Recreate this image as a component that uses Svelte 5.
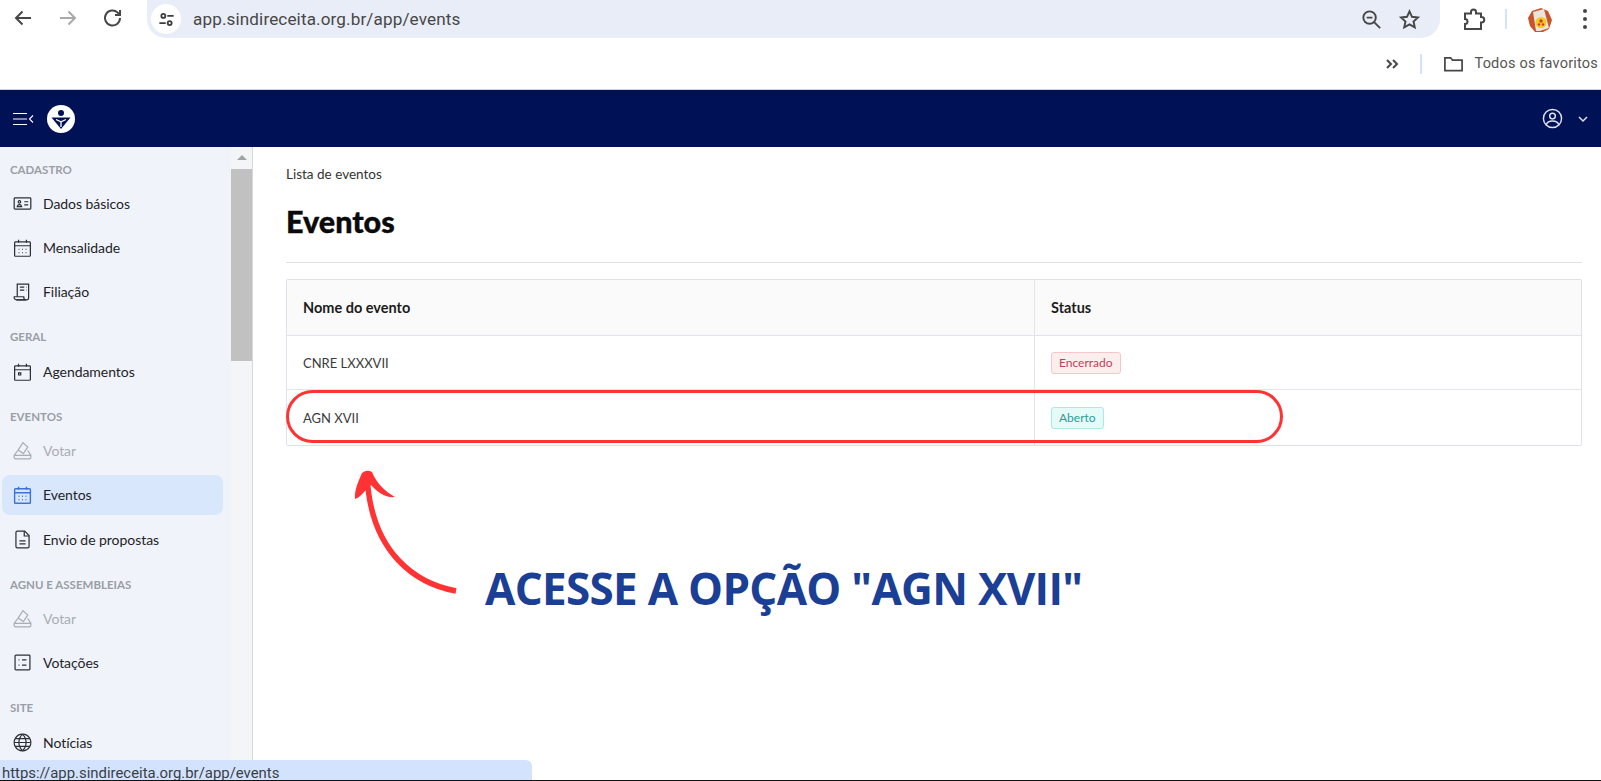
<script>
  const icons = {
    card: ['M3.500 5.500h17a1 1 0 0 1 1 1v11a1 1 0 0 1-1 1h-17a1 1 0 0 1-1-1v-11a1 1 0 0 1 1-1z', 'M6 15.500c.3-1.600 1.200-2.200 2.500-2.200s2.200.6 2.500 2.200H6z', 'M8.500 8.800a1.400 1.400 0 1 0 .01 0z', 'M14 10h4.500M14 13.500h4.500'],
    cal: ['M4 5.500h16a1 1 0 0 1 1 1V21a1 1 0 0 1-1 1H4a1 1 0 0 1-1-1V6.500a1 1 0 0 1 1-1z', 'M3 10h18M7.500 3v3.500M16.500 3v3.500', 'M7.500 14h1M11.500 14h1M15.500 14h1M7.500 18h1M11.500 18h1M15.500 18h1'],
    doc: ['M6 18V3.500h13V19a2.500 2.500 0 0 1-2.500 2.500H5', 'M2.500 18h11v1a2.500 2.500 0 0 0 2.500 2.500H5A2.500 2.500 0 0 1 2.500 19z', 'M9 7h5M9 10.500h5M16 7h.5M16 10.500h.5'],
    appt: ['M4 5.500h16a1 1 0 0 1 1 1V21a1 1 0 0 1-1 1H4a1 1 0 0 1-1-1V6.500a1 1 0 0 1 1-1z', 'M3 10h18M7.500 3v3.500M16.500 3v3.500', 'M7.500 13.500h2.500v2.500H7.500z'],
    vote: ['M2.500 17.500h19v2.500a1.500 1.500 0 0 1-1.500 1.500H4A1.500 1.500 0 0 1 2.500 20z', 'M2.500 17.500L6.500 12M21.500 17.500L18 12', 'M7 11.500L12.500 3l5.500 5-5 7.500z'],
    file: ['M6 2.500h8.500L19.500 7.500V20a1.500 1.500 0 0 1-1.500 1.500H6A1.500 1.500 0 0 1 4.500 20V4A1.500 1.500 0 0 1 6 2.500z', 'M14 2.500v5.500h5.500', 'M8.500 13.500h7M8.500 17h7'],
    list: ['M4.500 3.500h15a1 1 0 0 1 1 1v15a1 1 0 0 1-1 1h-15a1 1 0 0 1-1-1v-15a1 1 0 0 1 1-1z', 'M7.500 9h1M7.500 15h1M11.500 9h5M11.500 15h5'],
    globe: ['M12 2.500a9.500 9.500 0 1 0 .01 0z', 'M2.500 12h19M3.800 7.500h16.400M3.800 16.500h16.400', 'M12 2.500c-5.500 5.500-5.500 13.500 0 19M12 2.500c5.500 5.500 5.500 13.500 0 19']
  };

  const menu = [
    { label: 'CADASTRO', items: [
      { name: 'Dados básicos', icon: 'card' },
      { name: 'Mensalidade', icon: 'cal' },
      { name: 'Filiação', icon: 'doc' }
    ] },
    { label: 'GERAL', items: [{ name: 'Agendamentos', icon: 'appt' }] },
    { label: 'EVENTOS', items: [
      { name: 'Votar', icon: 'vote', disabled: true },
      { name: 'Eventos', icon: 'cal', active: true },
      { name: 'Envio de propostas', icon: 'file' }
    ] },
    { label: 'AGNU E ASSEMBLEIAS', items: [
      { name: 'Votar', icon: 'vote', disabled: true },
      { name: 'Votações', icon: 'list' }
    ] },
    { label: 'SITE', items: [{ name: 'Notícias', icon: 'globe' }] }
  ];
</script>

<div class="page">
  <div class="toolbar">
    <div class="nav">
      <svg class="ci" viewBox="0 0 24 24"><path d="M20 12H5M11.500 5.500L5 12l6.500 6.500" /></svg>
      <svg class="ci dim" viewBox="0 0 24 24"><path d="M4 12h15M12.500 5.500L19 12l-6.500 6.500" /></svg>
      <svg class="ci" viewBox="0 0 24 24"><path d="M19 12a7.500 7.500 0 1 1-2.300-5.400L19 9M19 4v5h-5" /></svg>
    </div>
    <div class="omnibox">
      <span class="tune">
        <svg viewBox="0 0 24 24"><circle cx="8" cy="7.500" r="2.500" /><path d="M13 7.500h8M3 16.500h8" /><circle cx="16" cy="16.500" r="2.500" /></svg>
      </span>
      <span class="url">app.sindireceita.org.br/app/events</span>
      <span class="spacer"></span>
      <svg class="ci small" viewBox="0 0 24 24"><circle cx="10" cy="10" r="6.500" /><path d="M15 15l6 6M7 10h6" /></svg>
      <svg class="ci small star" viewBox="0 0 24 24"><path d="M12 3.500l2.600 5.700 6.200.7-4.600 4.200 1.300 6.100-5.500-3.100-5.500 3.100 1.300-6.100-4.600-4.200 6.200-.7z" /></svg>
    </div>
    <div class="tools">
      <svg class="ci puzzle" viewBox="0 0 24 24"><path d="M3 6.500h6V5a2.500 2.500 0 0 1 5 0v1.500h5V10h.5a2.700 2.700 0 0 1 0 5.500H19V22H3v-5c2 0 2.500-1 2.500-2.500S5 12 3 12z" /></svg>
      <span class="vsep"></span>
      <svg class="avatar" viewBox="0 0 24 25">
        <path d="M4 4l9-3 7 3 4 9-3 9-6 3H7l-5-6-2-8z" fill="#c9532a" />
        <path d="M5 5l11-3 5 19-9 3H8z" fill="#e9e4dd" />
        <circle cx="13" cy="15.500" r="5.500" fill="#f5c91f" />
        <circle cx="13" cy="14" r="1.700" fill="#c9402a" />
        <circle cx="11" cy="17.500" r="1.200" fill="#c9402a" />
        <circle cx="15" cy="17.500" r="1.200" fill="#c9402a" />
      </svg>
      <svg class="dots" viewBox="0 0 6 22"><circle cx="3" cy="3" r="2" /><circle cx="3" cy="11" r="2" /><circle cx="3" cy="19" r="2" /></svg>
    </div>
  </div>

  <div class="bookmarks">
    <svg class="chev" viewBox="0 0 14 12"><path d="M2 2l4 4-4 4M8 2l4 4-4 4" /></svg>
    <span class="vsep tall"></span>
    <svg class="folder" viewBox="0 0 22 18"><path d="M2 2.500h6l2 2.500h10v11H2z" /></svg>
    <span class="fav">Todos os favoritos</span>
  </div>

  <header class="topbar">
    <svg class="burger" viewBox="0 0 22 14"><path d="M1 1.500h14M1 7h14M1 12.500h14M21 3.500L17.500 7l3.500 3.500" /></svg>
    <svg class="logo" viewBox="0 0 28 28">
      <circle cx="14" cy="14" r="14" fill="#fff" />
      <circle cx="14" cy="8" r="3" fill="#001155" />
      <path d="M4.500 12.500h19L14 24z" fill="#001155" />
      <path d="M9 14.500l5 2.300 5-2.300M14 16.800V22" stroke="#fff" stroke-width="1.300" fill="none" />
    </svg>
    <span class="spacer"></span>
    <svg class="user" viewBox="0 0 22 22"><circle cx="11" cy="11" r="9.500" /><circle cx="11" cy="8.500" r="3" /><path d="M4.500 17.500c1-3 3.500-3.800 6.500-3.800s5.500.8 6.500 3.800" /></svg>
    <svg class="down" viewBox="0 0 12 8"><path d="M2 2l4 4 4-4" /></svg>
  </header>

  <div class="body">
    <aside class="sidebar">
      <nav class="menu">
        {#each menu as group}
          <div class="label">{group.label}</div>
          {#each group.items as item}
            <div class="item" class:active={item.active} class:disabled={item.disabled}>
              <svg class="mi" viewBox="0 0 24 24">
                {#each icons[item.icon] as d}<path {d} />{/each}
              </svg>
              <span>{item.name}</span>
            </div>
          {/each}
        {/each}
      </nav>
      <div class="scrollbar">
        <span class="arrow"></span>
        <span class="thumb"></span>
      </div>
    </aside>

    <main class="content">
      <div class="crumb">Lista de eventos</div>
      <h1>Eventos</h1>
      <div class="rule"></div>
      <div class="table">
        <div class="row head">
          <div class="c1">Nome do evento</div>
          <div class="c2">Status</div>
        </div>
        <div class="row r1">
          <div class="c1">CNRE LXXXVII</div>
          <div class="c2"><span class="tag closed">Encerrado</span></div>
        </div>
        <div class="row r2">
          <div class="c1">AGN XVII</div>
          <div class="c2"><span class="tag open">Aberto</span></div>
        </div>
      </div>
    </main>
  </div>

  <div class="ring"></div>
  <svg class="curve" viewBox="0 0 140 150">
    <path class="shaft" d="M116 131C78 124 30 95 27 14" />
    <path class="head-mark" d="M15 39C14 30 19 20 22 13Q27 9 32 12C36 22 44 31 55 37C46 38 38 33 31 25C25 29 22 37 15 39z" />
  </svg>
  <div class="callout">ACESSE A OPÇÃO "AGN XVII"</div>
  <div class="status">https://app.sindireceita.org.br/app/events</div>
</div>

<style>
  :global(body) {
    margin: 0;
    background: #fff;
    overflow: hidden;
  }
  .page {
    position: relative;
    width: 1601px;
    height: 781px;
    overflow: hidden;
    background: #fff;
    font-family: Lato, "Noto Sans", sans-serif;
    color: #1a1a1a;
    display: flex;
    flex-direction: column;
  }
  svg {
    display: block;
    flex: none;
  }
  .spacer {
    flex: 1;
  }

  .toolbar {
    height: 38px;
    display: flex;
    align-items: center;
    flex: none;
  }
  .nav {
    width: 147px;
    box-sizing: border-box;
    display: flex;
    align-items: center;
    gap: 21px;
    padding: 0 0 2px 11px;
    flex: none;
  }
  .ci {
    width: 24px;
    height: 24px;
    fill: none;
    stroke: #474747;
    stroke-width: 2;
  }
  .ci.dim {
    stroke: #a9a9a9;
  }
  .ci.small {
    width: 23px;
    height: 23px;
  }
  .ci.star {
    margin: 0 19px 0 15px;
  }
  .omnibox {
    width: 1293px;
    height: 38px;
    flex: none;
    box-sizing: border-box;
    padding-left: 4px;
    display: flex;
    align-items: center;
    background: #e9edf7;
    border-radius: 0 0 19px 19px;
  }
  .tune {
    width: 30px;
    height: 30px;
    border-radius: 50%;
    background: #fff;
    display: flex;
    align-items: center;
    justify-content: center;
  }
  .tune svg {
    width: 19px;
    height: 19px;
    fill: none;
    stroke: #3c3c3c;
    stroke-width: 2.300;
  }
  .url {
    margin-left: 12px;
    font: 400 17.100px/20px Roboto, sans-serif;
    color: #474747;
    letter-spacing: 0.130px;
  }
  .tools {
    display: flex;
    align-items: center;
    padding-left: 22px;
  }
  .puzzle {
    width: 24px;
    height: 24px;
  }
  .vsep {
    width: 2px;
    height: 20px;
    background: #d3e3fd;
    margin: 0 21px 0 19px;
  }
  .avatar {
    width: 24px;
    height: 25px;
  }
  .dots {
    width: 6px;
    height: 22px;
    margin-left: 30px;
    fill: #474747;
  }

  .bookmarks {
    height: 50px;
    flex: none;
    box-sizing: content-box;
    border-bottom: 1px solid #cfd3dc;
    display: flex;
    align-items: center;
    justify-content: flex-end;
    padding: 0 3px 0 0;
    margin-top: 1px;
  }
  .chev {
    width: 14px;
    height: 12px;
    fill: none;
    stroke: #474747;
    stroke-width: 2;
  }
  .vsep.tall {
    height: 20px;
    margin: 0 21px 0 21px;
  }
  .folder {
    width: 21px;
    height: 18px;
    fill: none;
    stroke: #474747;
    stroke-width: 1.800;
    margin-right: 10px;
  }
  .fav {
    font: 400 14.500px/18px Roboto, sans-serif;
    color: #555;
    letter-spacing: 0.200px;
  }

  .topbar {
    height: 57px;
    flex: none;
    box-sizing: border-box;
    background: #001155;
    display: flex;
    align-items: center;
    padding: 0 12px 0 12px;
  }
  .burger {
    width: 22px;
    height: 14px;
    fill: none;
    stroke: #fff;
    stroke-width: 1.100;
  }
  .logo {
    width: 28px;
    height: 28px;
    margin-left: 13px;
  }
  .user {
    width: 21px;
    height: 21px;
    fill: none;
    stroke: #dfe3ee;
    stroke-width: 1.500;
  }
  .down {
    width: 12px;
    height: 8px;
    margin-left: 14px;
    fill: none;
    stroke: #dfe3ee;
    stroke-width: 1.500;
  }

  .body {
    flex: 1;
    min-height: 0;
    display: flex;
  }
  .sidebar {
    width: 253px;
    box-sizing: border-box;
    flex: none;
    border-right: 1px solid #d5d8de;
    background: #f0f4fa;
    display: flex;
    overflow: hidden;
  }
  .menu {
    width: 231px;
    flex: none;
    box-sizing: border-box;
    padding: 16px 8px 0 2px;
  }
  .label {
    height: 14px;
    line-height: 14px;
    font-size: 11.500px;
    font-weight: 700;
    color: #9a9ea6;
    padding-left: 8px;
    margin: 18.500px 0 7px;
    white-space: nowrap;
  }
  .label:first-child {
    margin-top: 0;
    margin-bottom: 6px;
  }
  .item {
    height: 40px;
    display: flex;
    align-items: center;
    border-radius: 8px;
    padding-left: 10px;
    margin-bottom: 4.300px;
    font-size: 14px;
    letter-spacing: -0.050px;
    color: #1f2329;
    white-space: nowrap;
  }
  .item:has(+ .label) {
    margin-bottom: 0;
  }
  .item.active {
    background: #d9e7fc;
  }
  .item.disabled {
    color: #a9adb3;
  }
  .mi {
    width: 21px;
    height: 21px;
    margin-right: 10px;
    fill: none;
    stroke: #2c3036;
    stroke-width: 1.400;
  }
  .active .mi {
    stroke: #3a72d8;
    stroke-width: 1.600;
  }
  .disabled .mi {
    stroke: #a9adb3;
  }
  .scrollbar {
    width: 21px;
    flex: none;
    background: #f4f5f7;
    display: flex;
    flex-direction: column;
    align-items: center;
  }
  .arrow {
    width: 0;
    height: 0;
    margin-top: 8px;
    border-left: 5px solid transparent;
    border-right: 5px solid transparent;
    border-bottom: 5px solid #a3a3a3;
  }
  .thumb {
    display: block;
    width: 100%;
    height: 192px;
    margin-top: 9px;
    background: #c1c1c1;
  }

  .content {
    flex: 1;
    min-width: 0;
    padding: 19px 19px 0 33px;
  }
  .crumb {
    font-size: 13.500px;
    line-height: 17px;
    color: #333;
  }
  h1 {
    margin: 21px 0 0;
    font-size: 30.500px;
    line-height: 34px;
    font-weight: 900;
    color: #0a0a0a;
    -webkit-text-stroke: 0.400px #0a0a0a;
  }
  .rule {
    height: 1px;
    margin-top: 24px;
    background: #dfe1e5;
  }
  .table {
    margin-top: 16px;
    border: 1px solid #dfe1e7;
    border-radius: 2px;
    font-size: 13px;
  }
  .row {
    display: flex;
    align-items: stretch;
    border-bottom: 1px solid #e2e4ea;
  }
  .row:last-child {
    border-bottom: none;
  }
  .row.head {
    height: 55px;
    background: #fafafa;
    font-size: 14.500px;
    font-weight: 700;
    color: #1c1c1c;
  }
  .row.r1 {
    height: 53px;
  }
  .row.r2 {
    height: 55px;
  }
  .c1,
  .c2 {
    display: flex;
    align-items: center;
    box-sizing: border-box;
    padding-left: 16px;
  }
  .c1 {
    width: 748px;
    border-right: 1px solid #e2e4ea;
    color: #3a3a3a;
  }
  .row.head .c1 {
    color: #1c1c1c;
  }
  .c2 {
    flex: 1;
  }
  .tag {
    display: inline-block;
    box-sizing: border-box;
    height: 22px;
    line-height: 20px;
    padding: 0 7px;
    border-radius: 3px;
    font-size: 12px;
    border: 1px solid;
  }
  .tag.closed {
    background: #fdeeee;
    border-color: #f6c6c8;
    color: #bd3f55;
  }
  .tag.open {
    background: #e5fbf8;
    border-color: #a8ebe3;
    color: #2a9d98;
  }

  .ring {
    position: absolute;
    left: 286px;
    top: 390px;
    width: 997px;
    height: 53px;
    box-sizing: border-box;
    border: 3.500px solid #ff3333;
    border-radius: 27px;
  }
  .curve {
    position: absolute;
    left: 340px;
    top: 460px;
    width: 140px;
    height: 150px;
    fill: none;
    overflow: visible;
  }
  .shaft {
    stroke: #ff3333;
    stroke-width: 5.500;
    stroke-linecap: butt;
    fill: none;
  }
  .head-mark {
    fill: #ff3333;
  }
  .callout {
    position: absolute;
    left: 485px;
    top: 563px;
    font: 700 44px/50px "Open Sans", sans-serif;
    letter-spacing: -0.700px;
    color: #1a3f94;
    white-space: nowrap;
  }
  .status {
    position: absolute;
    left: 0;
    bottom: 1px;
    width: 532px;
    height: 20px;
    box-sizing: border-box;
    padding-left: 2px;
    background: #d3e3fd;
    border-radius: 0 6px 0 0;
    font: 400 14.900px/26px Roboto, sans-serif;
    color: #3a3f47;
    overflow: hidden;
  }
  .page::after {
    content: "";
    position: absolute;
    left: 0;
    right: 0;
    bottom: 0;
    height: 1px;
    background: #111;
  }
</style>
